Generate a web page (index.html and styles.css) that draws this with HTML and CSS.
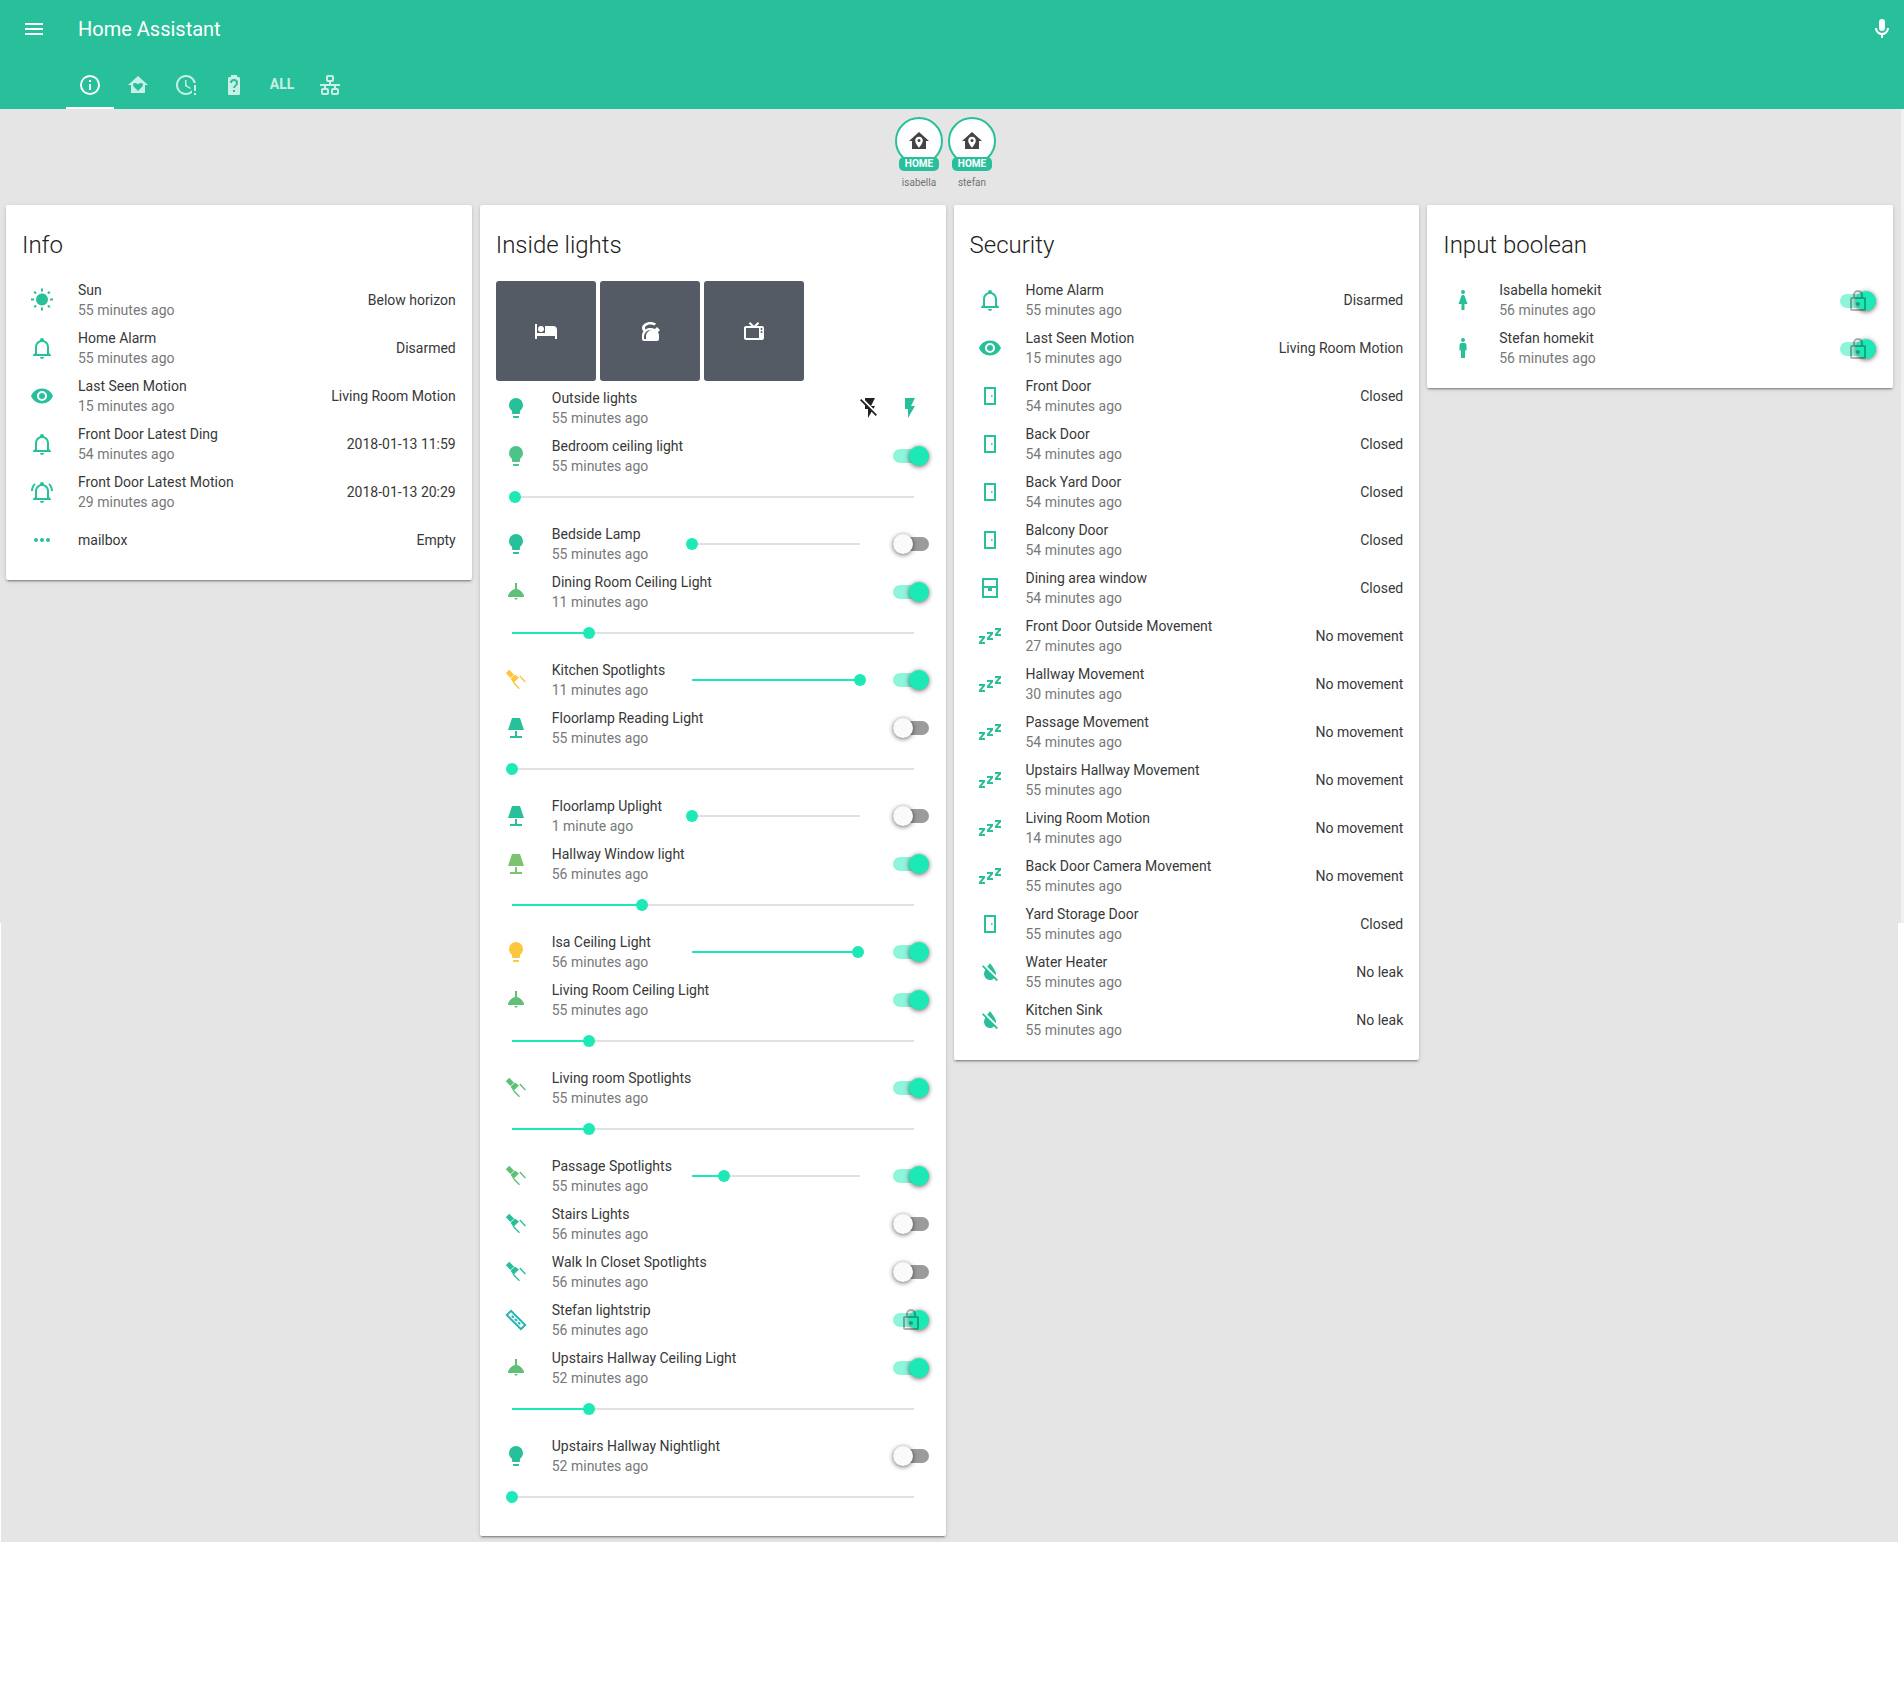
FILE: index.html
```html
<!DOCTYPE html>
<html lang="en">
<head>
    <meta charset="UTF-8">
    <meta name="viewport" content="width=device-width, initial-scale=1.0">
    <title>Home Assistant</title>
    <link rel="stylesheet" href="styles.css">
</head>
<body>
    <svg class="sprite" xmlns="http://www.w3.org/2000/svg">
        <symbol id="i-menu" viewBox="0 0 24 24"><path d="M3,6H21V8H3V6M3,11H21V13H3V11M3,16H21V18H3V16Z"/></symbol>
        <symbol id="i-info" viewBox="0 0 24 24"><path d="M11,9H13V7H11M12,20C7.59,20 4,16.41 4,12C4,7.59 7.59,4 12,4C16.41,4 20,7.59 20,12C20,16.41 16.41,20 12,20M12,2A10,10 0 0,0 2,12A10,10 0 0,0 12,22A10,10 0 0,0 22,12A10,10 0 0,0 12,2M11,17H13V11H11V17Z"/></symbol>
        <symbol id="i-home-heart" viewBox="0 0 24 24"><path fill-rule="evenodd" d="M12,3L2,12H5V20H19V12H22L12,3M12,18L7.6,13.4C6.5,12.2 7,10 9,10C10.2,10 11.4,10.6 12,11.4C12.6,10.6 13.8,10 15,10C17,10 17.5,12.2 16.4,13.4L12,18Z"/></symbol>
        <symbol id="i-clock-alert" viewBox="0 0 24 24"><path d="M11,7V13L16.2,16.1L17,14.9L12.5,12.2V7H11M20,12V18H22V12H20M20,20V22H22V20H20M18,20C16.3,21.3 14.3,22 12,22C6.5,22 2,17.5 2,12C2,6.5 6.5,2 12,2C16.8,2 20.9,5.4 21.8,10H19.7C18.8,6.6 15.7,4 12,4C7.6,4 4,7.6 4,12C4,16.4 7.6,20 12,20C14.4,20 16.5,18.9 18,17.3V20Z"/></symbol>
        <symbol id="i-battery" viewBox="0 0 24 24"><path d="M15.07,12.25L14.17,13.17C13.63,13.71 13.25,14.18 13.09,15H11.05C11.16,14.1 11.56,13.28 12.17,12.67L13.41,11.41C13.78,11.05 14,10.55 14,10C14,8.89 13.1,8 12,8A2,2 0 0,0 10,10H8A4,4 0 0,1 12,6A4,4 0 0,1 16,10C16,10.88 15.64,11.68 15.07,12.25M13,19H11V17H13M16.67,4H15V2H9V4H7.33A1.33,1.33 0 0,0 6,5.33V20.67C6,21.4 6.6,22 7.33,22H16.67A1.33,1.33 0 0,0 18,20.67V5.33C18,4.6 17.4,4 16.67,4Z"/></symbol>
        <symbol id="i-lan" viewBox="0 0 24 24"><path d="M10,2C8.89,2 8,2.89 8,4V7C8,8.11 8.89,9 10,9H11V11H2V13H6V15H5C3.89,15 3,15.89 3,17V20C3,21.11 3.89,22 5,22H9C10.11,22 11,21.11 11,20V17C11,15.89 10.11,15 9,15H8V13H16V15H15C13.89,15 13,15.89 13,17V20C13,21.11 13.89,22 15,22H19C20.11,22 21,21.11 21,20V17C21,15.89 20.11,15 19,15H18V13H22V11H13V9H14C15.11,9 16,8.11 16,7V4C16,2.89 15.11,2 14,2H10M10,4H14V7H10V4M5,17H9V20H5V17M15,17H19V20H15V17Z"/></symbol>
        <symbol id="i-mic" viewBox="0 0 24 24"><path d="M12,2A3,3 0 0,1 15,5V11A3,3 0 0,1 12,14A3,3 0 0,1 9,11V5A3,3 0 0,1 12,2M19,11C19,14.53 16.39,17.44 13,17.93V21H11V17.93C7.61,17.44 5,14.53 5,11H7A5,5 0 0,0 12,16A5,5 0 0,0 17,11H19Z"/></symbol>
        <symbol id="i-marker" viewBox="0 0 24 24"><path d="M12,3L2,12H5V20H19V12H22L12,3M12,7.7C14.1,7.7 15.8,9.4 15.8,11.5C15.8,14.5 12,18.7 12,18.7C12,18.7 8.2,14.5 8.2,11.5C8.2,9.4 9.9,7.7 12,7.7M12,10A1.5,1.5 0 0,0 10.5,11.5A1.5,1.5 0 0,0 12,13A1.5,1.5 0 0,0 13.5,11.5A1.5,1.5 0 0,0 12,10Z"/></symbol>
        <symbol id="i-sun" viewBox="0 0 24 24"><path d="M3.55,18.54L4.96,19.95L6.76,18.16L5.34,16.74M11,22.45C11.32,22.45 13,22.45 13,22.45V19.5H11M12,5.5A6,6 0 0,0 6,11.5A6,6 0 0,0 12,17.5A6,6 0 0,0 18,11.5C18,8.18 15.31,5.5 12,5.5M20,12.5H23V10.5H20M17.24,18.16L19.04,19.95L20.45,18.54L18.66,16.74M20.45,4.46L19.04,3.05L17.24,4.84L18.66,6.26M13,0.55H11V3.5H13M4,10.5H1V12.5H4M6.76,4.84L4.96,3.05L3.55,4.46L5.34,6.26L6.76,4.84Z"/></symbol>
        <symbol id="i-bell" viewBox="0 0 24 24"><path d="M10,21H14A2,2 0 0,1 12,23A2,2 0 0,1 10,21M21,19V20H3V19L5,17V11C5,7.9 7.03,5.17 10,4.29C10,4.19 10,4.1 10,4A2,2 0 0,1 12,2A2,2 0 0,1 14,4C14,4.1 14,4.19 14,4.29C16.97,5.17 19,7.9 19,11V17L21,19M17,11A5,5 0 0,0 12,6A5,5 0 0,0 7,11V18H17V11Z"/></symbol>
        <symbol id="i-bell-ring" viewBox="0 0 24 24"><path d="M10,21H14A2,2 0 0,1 12,23A2,2 0 0,1 10,21M21,19V20H3V19L5,17V11C5,7.9 7.03,5.17 10,4.29C10,4.19 10,4.1 10,4A2,2 0 0,1 12,2A2,2 0 0,1 14,4C14,4.1 14,4.19 14,4.29C16.97,5.17 19,7.9 19,11V17L21,19M17,11A5,5 0 0,0 12,6A5,5 0 0,0 7,11V18H17V11M19.75,3.19L18.33,4.61C20.04,6.3 21,8.6 21,11H23C23,8.07 21.84,5.25 19.75,3.19M1,11H3C3,8.6 3.96,6.3 5.67,4.61L4.25,3.19C2.16,5.25 1,8.07 1,11Z"/></symbol>
        <symbol id="i-eye" viewBox="0 0 24 24"><path d="M12,9A3,3 0 0,0 9,12A3,3 0 0,0 12,15A3,3 0 0,0 15,12A3,3 0 0,0 12,9M12,17A5,5 0 0,1 7,12A5,5 0 0,1 12,7A5,5 0 0,1 17,12A5,5 0 0,1 12,17M12,4.5C7,4.5 2.73,7.61 1,12C2.73,16.39 7,19.5 12,19.5C17,19.5 21.27,16.39 23,12C21.27,7.61 17,4.5 12,4.5Z"/></symbol>
        <symbol id="i-dots" viewBox="0 0 24 24"><path d="M16,12A2,2 0 0,1 18,10A2,2 0 0,1 20,12A2,2 0 0,1 18,14A2,2 0 0,1 16,12M10,12A2,2 0 0,1 12,10A2,2 0 0,1 14,12A2,2 0 0,1 12,14A2,2 0 0,1 10,12M4,12A2,2 0 0,1 6,10A2,2 0 0,1 8,12A2,2 0 0,1 6,14A2,2 0 0,1 4,12Z"/></symbol>
        <symbol id="i-bulb" viewBox="0 0 24 24"><path d="M12,2A7,7 0 0,0 5,9C5,11.38 6.19,13.47 8,14.74V17A1,1 0 0,0 9,18H15A1,1 0 0,0 16,17V14.74C17.81,13.47 19,11.38 19,9A7,7 0 0,0 12,2M9,21A1,1 0 0,0 10,22H14A1,1 0 0,0 15,21V20H9V21Z"/></symbol>
        <symbol id="i-ceiling" viewBox="0 0 24 24"><path d="M11,3H13V9C16,9.5 18.5,12 20,15.5V17H4V15.5C5.5,12 8,9.5 11,9V3M10,18H14L12,20Z"/></symbol>
        <symbol id="i-lamp" viewBox="0 0 24 24"><path d="M8,2H16L20,14H4L8,2M11,15H13V20H18V22H6V20H11V15Z"/></symbol>
        <symbol id="i-spot" viewBox="0 0 24 24"><path d="M1.8,5.2L5.2,1.8L10,6.4L6.4,10ZM6.6,10.8L10.8,6.6L15,9.4L9.4,15ZM15.3,8.6L16.3,7.6L21.9,13.6L20.9,14.6ZM8.9,15.1L9.9,14.1L15.9,20.3L14.9,21.3Z"/></symbol>
        <symbol id="i-strip" viewBox="0 0 24 24"><g transform="rotate(45 12 12)"><path fill-rule="evenodd" d="M1,8H23V16H1ZM3,10V14H21V10Z"/><path d="M6,11H9V13H6ZM10.5,11H13.5V13H10.5ZM15,11H18V13H15Z"/></g></symbol>
        <symbol id="i-hotel" viewBox="0 0 24 24"><path d="M19,7H11V14H3V5H1V20H3V17H21V20H23V11A4,4 0 0,0 19,7M7,13A3,3 0 0,0 10,10A3,3 0 0,0 7,7A3,3 0 0,0 4,10A3,3 0 0,0 7,13Z"/></symbol>
        <symbol id="i-kettle" viewBox="0 0 24 24"><path d="M12.5,3C7.81,3 4,5.69 4,9V9C4,10.19 4.5,11.34 5.44,12.33C4.53,13.5 4,14.96 4,16.5C4,17.64 4,18.83 4,20C4,21.11 4.89,22 6,22H19C20.11,22 21,21.11 21,20C21,18.85 21,17.61 21,16.5C21,15.28 20.66,14.07 20,13L22,11L19,8L16.9,10.1C15.58,9.38 14.05,9 12.5,9C10.65,9 8.95,9.53 7.55,10.41C7.19,9.97 7,9.5 7,9C7,7.21 9.46,5.5 12.5,5.5V5.5C13.93,5.5 15.3,5.89 16.34,6.58L18.11,4.81C16.59,3.66 14.55,3 12.5,3M12.5,11C12.84,11 13.17,11.04 13.5,11.09C10.39,11.57 8,14.25 8,17.5V20H6V17.5A6.5,6.5 0 0,1 12.5,11Z"/></symbol>
        <symbol id="i-tv" viewBox="0 0 24 24"><path d="M8.16,3L6.75,4.41L9.34,7H4C2.89,7 2,7.89 2,9V19C2,20.11 2.89,21 4,21H20C21.11,21 22,20.11 22,19V9C22,7.89 21.11,7 20,7H14.66L17.25,4.41L15.84,3L12,6.84L8.16,3M4,9H17V19H4V9M19.5,9A1,1 0 0,1 20.5,10A1,1 0 0,1 19.5,11A1,1 0 0,1 18.5,10A1,1 0 0,1 19.5,9M19.5,12A1,1 0 0,1 20.5,13A1,1 0 0,1 19.5,14A1,1 0 0,1 18.5,13A1,1 0 0,1 19.5,12Z"/></symbol>
        <symbol id="i-flash" viewBox="0 0 24 24"><path d="M7,2V13H10V22L17,10H13L17,2H7Z"/></symbol>
        <symbol id="i-flash-off" viewBox="0 0 24 24"><path d="M17,10H13L17,2H7V4.18L15.46,12.64M3.27,3L2,4.27L7,9.27V13H10V22L13.58,15.86L17.73,20L19,18.73L3.27,3Z"/></symbol>
        <symbol id="i-door" viewBox="0 0 24 24"><path fill-rule="evenodd" d="M6,3H18V21H6ZM8,5V19H16V5ZM13,11.2H14.6V12.8H13Z"/></symbol>
        <symbol id="i-window" viewBox="0 0 24 24"><path fill-rule="evenodd" d="M4,2H20V22H4ZM6,4V10H18V4ZM6,12V20H18V12H14V15H10V12Z"/></symbol>
        <symbol id="i-sleep" viewBox="0 0 24 24"><path d="M23,12H17V10L20.39,6H17V4H23V6L19.62,10H23V12M15,16H9V14L12.39,10H9V8H15V10L11.62,14H15V16M7,20H1V18L4.39,14H1V12H7V14L3.62,18H7V20Z"/></symbol>
        <symbol id="i-water-off" viewBox="0 0 24 24"><path d="M17.12,17.12L12.5,12.5L5.27,5.27L4,6.55L7.32,9.87C6.55,11.32 6,12.79 6,14A6,6 0 0,0 12,20C13.5,20 14.9,19.43 15.96,18.5L18.59,21.13L19.86,19.86L17.12,17.12M18,14C18,10 12,3.2 12,3.2C12,3.2 10.67,4.71 9.33,6.72L17.76,15.15C17.91,14.79 18,14.4 18,14Z"/></symbol>
        <symbol id="i-female" viewBox="0 0 24 24"><path d="M12,2A2,2 0 0,1 14,4A2,2 0 0,1 12,6A2,2 0 0,1 10,4A2,2 0 0,1 12,2M10.5,22V16H7.5L10.09,8.41C10.34,7.59 11.1,7 12,7C12.9,7 13.66,7.59 13.91,8.41L16.5,16H13.5V22H10.5Z"/></symbol>
        <symbol id="i-male" viewBox="0 0 24 24"><path d="M12,2A2,2 0 0,1 14,4A2,2 0 0,1 12,6A2,2 0 0,1 10,4A2,2 0 0,1 12,2M10.5,7H13.5A2,2 0 0,1 15.5,9V14.5H14V22H10V14.5H8.5V9A2,2 0 0,1 10.5,7Z"/></symbol>
        <symbol id="i-lock" viewBox="0 0 24 24"><path d="M12,17C10.89,17 10,16.1 10,15C10,13.89 10.89,13 12,13A2,2 0 0,1 14,15A2,2 0 0,1 12,17M18,20V10H6V20H18M18,8A2,2 0 0,1 20,10V20A2,2 0 0,1 18,22H6C4.89,22 4,21.1 4,20V10C4,8.89 4.89,8 6,8H7V6A5,5 0 0,1 12,1A5,5 0 0,1 17,6V8H18M12,3A3,3 0 0,0 9,6V8H15V6A3,3 0 0,0 12,3Z"/></symbol>
    </svg>

    <header class="app-header">
        <div class="toolbar">
            <span class="icon-button"><svg class="ico"><use href="#i-menu"/></svg></span>
            <div class="app-title">Home Assistant</div>
            <span class="icon-button"><svg class="ico"><use href="#i-mic"/></svg></span>
        </div>
        <nav class="tabs">
            <div class="tab active"><svg class="ico"><use href="#i-info"/></svg></div>
            <div class="tab"><svg class="ico"><use href="#i-home-heart"/></svg></div>
            <div class="tab"><svg class="ico"><use href="#i-clock-alert"/></svg></div>
            <div class="tab"><svg class="ico"><use href="#i-battery"/></svg></div>
            <div class="tab tab-text">ALL</div>
            <div class="tab"><svg class="ico"><use href="#i-lan"/></svg></div>
        </nav>
    </header>

    <div class="badges">
        <div class="badge">
            <div class="badge-circle"><svg class="ico"><use href="#i-marker"/></svg></div>
            <div class="badge-label">HOME</div>
            <div class="badge-name">isabella</div>
        </div>
        <div class="badge">
            <div class="badge-circle"><svg class="ico"><use href="#i-marker"/></svg></div>
            <div class="badge-label">HOME</div>
            <div class="badge-name">stefan</div>
        </div>
    </div>

    <main class="columns">
        <section class="card">
            <h2 class="card-title">Info</h2>
            <div class="row"><svg class="row-icon"><use href="#i-sun"/></svg><div class="info"><div class="name">Sun</div><div class="ago">55 minutes ago</div></div><div class="value">Below horizon</div></div>
            <div class="row"><svg class="row-icon"><use href="#i-bell"/></svg><div class="info"><div class="name">Home Alarm</div><div class="ago">55 minutes ago</div></div><div class="value">Disarmed</div></div>
            <div class="row"><svg class="row-icon"><use href="#i-eye"/></svg><div class="info"><div class="name">Last Seen Motion</div><div class="ago">15 minutes ago</div></div><div class="value">Living Room Motion</div></div>
            <div class="row"><svg class="row-icon"><use href="#i-bell"/></svg><div class="info"><div class="name">Front Door Latest Ding</div><div class="ago">54 minutes ago</div></div><div class="value">2018-01-13 11:59</div></div>
            <div class="row"><svg class="row-icon"><use href="#i-bell-ring"/></svg><div class="info"><div class="name">Front Door Latest Motion</div><div class="ago">29 minutes ago</div></div><div class="value">2018-01-13 20:29</div></div>
            <div class="row"><svg class="row-icon"><use href="#i-dots"/></svg><div class="info"><div class="name">mailbox</div></div><div class="value">Empty</div></div>
        </section>

        <section class="card">
            <h2 class="card-title">Inside lights</h2>
            <div class="tiles">
                <div class="tile"><svg class="ico"><use href="#i-hotel"/></svg></div>
                <div class="tile"><svg class="ico"><use href="#i-kettle"/></svg></div>
                <div class="tile"><svg class="ico"><use href="#i-tv"/></svg></div>
            </div>
            <div class="row">
                <svg class="row-icon"><use href="#i-bulb"/></svg>
                <div class="info"><div class="name">Outside lights</div><div class="ago">55 minutes ago</div></div>
                <svg class="flash-btn flash-off"><use href="#i-flash-off"/></svg>
                <svg class="flash-btn flash-on"><use href="#i-flash"/></svg>
            </div>
            <div class="row">
                <svg class="row-icon lit-mint"><use href="#i-bulb"/></svg>
                <div class="info"><div class="name">Bedroom ceiling light</div><div class="ago">55 minutes ago</div></div>
                <div class="toggle on"><span class="knob"></span></div>
            </div>
            <div class="slider-row"><div class="slider"><div class="fill" style="width:0.7%"></div><span class="thumb"></span></div></div>
            <div class="row">
                <svg class="row-icon"><use href="#i-bulb"/></svg>
                <div class="info"><div class="name">Bedside Lamp</div><div class="ago">55 minutes ago</div></div>
                <div class="slider inline"><div class="fill" style="width:0%"></div><span class="thumb"></span></div>
                <div class="toggle"><span class="knob"></span></div>
            </div>
            <div class="row">
                <svg class="row-icon lit-green"><use href="#i-ceiling"/></svg>
                <div class="info"><div class="name">Dining Room Ceiling Light</div><div class="ago">11 minutes ago</div></div>
                <div class="toggle on"><span class="knob"></span></div>
            </div>
            <div class="slider-row"><div class="slider"><div class="fill" style="width:19.2%"></div><span class="thumb"></span></div></div>
            <div class="row">
                <svg class="row-icon lit-yellow"><use href="#i-spot"/></svg>
                <div class="info"><div class="name">Kitchen Spotlights</div><div class="ago">11 minutes ago</div></div>
                <div class="slider inline"><div class="fill" style="width:100%"></div><span class="thumb"></span></div>
                <div class="toggle on"><span class="knob"></span></div>
            </div>
            <div class="row">
                <svg class="row-icon"><use href="#i-lamp"/></svg>
                <div class="info"><div class="name">Floorlamp Reading Light</div><div class="ago">55 minutes ago</div></div>
                <div class="toggle"><span class="knob"></span></div>
            </div>
            <div class="slider-row"><div class="slider"><div class="fill" style="width:0%"></div><span class="thumb"></span></div></div>
            <div class="row">
                <svg class="row-icon"><use href="#i-lamp"/></svg>
                <div class="info"><div class="name">Floorlamp Uplight</div><div class="ago">1 minute ago</div></div>
                <div class="slider inline"><div class="fill" style="width:0%"></div><span class="thumb"></span></div>
                <div class="toggle"><span class="knob"></span></div>
            </div>
            <div class="row">
                <svg class="row-icon lit-lime"><use href="#i-lamp"/></svg>
                <div class="info"><div class="name">Hallway Window light</div><div class="ago">56 minutes ago</div></div>
                <div class="toggle on"><span class="knob"></span></div>
            </div>
            <div class="slider-row"><div class="slider"><div class="fill" style="width:32.3%"></div><span class="thumb"></span></div></div>
            <div class="row">
                <svg class="row-icon lit-yellow"><use href="#i-bulb"/></svg>
                <div class="info"><div class="name">Isa Ceiling Light</div><div class="ago">56 minutes ago</div></div>
                <div class="slider inline"><div class="fill" style="width:99.2%"></div><span class="thumb"></span></div>
                <div class="toggle on"><span class="knob"></span></div>
            </div>
            <div class="row">
                <svg class="row-icon lit-green"><use href="#i-ceiling"/></svg>
                <div class="info"><div class="name">Living Room Ceiling Light</div><div class="ago">55 minutes ago</div></div>
                <div class="toggle on"><span class="knob"></span></div>
            </div>
            <div class="slider-row"><div class="slider"><div class="fill" style="width:19.2%"></div><span class="thumb"></span></div></div>
            <div class="row">
                <svg class="row-icon lit-green"><use href="#i-spot"/></svg>
                <div class="info"><div class="name">Living room Spotlights</div><div class="ago">55 minutes ago</div></div>
                <div class="toggle on"><span class="knob"></span></div>
            </div>
            <div class="slider-row"><div class="slider"><div class="fill" style="width:19.2%"></div><span class="thumb"></span></div></div>
            <div class="row">
                <svg class="row-icon lit-green"><use href="#i-spot"/></svg>
                <div class="info"><div class="name">Passage Spotlights</div><div class="ago">55 minutes ago</div></div>
                <div class="slider inline"><div class="fill" style="width:19.2%"></div><span class="thumb"></span></div>
                <div class="toggle on"><span class="knob"></span></div>
            </div>
            <div class="row">
                <svg class="row-icon"><use href="#i-spot"/></svg>
                <div class="info"><div class="name">Stairs Lights</div><div class="ago">56 minutes ago</div></div>
                <div class="toggle"><span class="knob"></span></div>
            </div>
            <div class="row">
                <svg class="row-icon"><use href="#i-spot"/></svg>
                <div class="info"><div class="name">Walk In Closet Spotlights</div><div class="ago">56 minutes ago</div></div>
                <div class="toggle"><span class="knob"></span></div>
            </div>
            <div class="row">
                <svg class="row-icon lit-blue"><use href="#i-strip"/></svg>
                <div class="info"><div class="name">Stefan lightstrip</div><div class="ago">56 minutes ago</div></div>
                <div class="toggle on"><span class="knob"></span><svg class="lock"><use href="#i-lock"/></svg></div>
            </div>
            <div class="row">
                <svg class="row-icon lit-green"><use href="#i-ceiling"/></svg>
                <div class="info"><div class="name">Upstairs Hallway Ceiling Light</div><div class="ago">52 minutes ago</div></div>
                <div class="toggle on"><span class="knob"></span></div>
            </div>
            <div class="slider-row"><div class="slider"><div class="fill" style="width:19.2%"></div><span class="thumb"></span></div></div>
            <div class="row">
                <svg class="row-icon"><use href="#i-bulb"/></svg>
                <div class="info"><div class="name">Upstairs Hallway Nightlight</div><div class="ago">52 minutes ago</div></div>
                <div class="toggle"><span class="knob"></span></div>
            </div>
            <div class="slider-row"><div class="slider"><div class="fill" style="width:0%"></div><span class="thumb"></span></div></div>
        </section>

        <section class="card">
            <h2 class="card-title">Security</h2>
            <div class="row"><svg class="row-icon"><use href="#i-bell"/></svg><div class="info"><div class="name">Home Alarm</div><div class="ago">55 minutes ago</div></div><div class="value">Disarmed</div></div>
            <div class="row"><svg class="row-icon"><use href="#i-eye"/></svg><div class="info"><div class="name">Last Seen Motion</div><div class="ago">15 minutes ago</div></div><div class="value">Living Room Motion</div></div>
            <div class="row"><svg class="row-icon"><use href="#i-door"/></svg><div class="info"><div class="name">Front Door</div><div class="ago">54 minutes ago</div></div><div class="value">Closed</div></div>
            <div class="row"><svg class="row-icon"><use href="#i-door"/></svg><div class="info"><div class="name">Back Door</div><div class="ago">54 minutes ago</div></div><div class="value">Closed</div></div>
            <div class="row"><svg class="row-icon"><use href="#i-door"/></svg><div class="info"><div class="name">Back Yard Door</div><div class="ago">54 minutes ago</div></div><div class="value">Closed</div></div>
            <div class="row"><svg class="row-icon"><use href="#i-door"/></svg><div class="info"><div class="name">Balcony Door</div><div class="ago">54 minutes ago</div></div><div class="value">Closed</div></div>
            <div class="row"><svg class="row-icon"><use href="#i-window"/></svg><div class="info"><div class="name">Dining area window</div><div class="ago">54 minutes ago</div></div><div class="value">Closed</div></div>
            <div class="row"><svg class="row-icon"><use href="#i-sleep"/></svg><div class="info"><div class="name">Front Door Outside Movement</div><div class="ago">27 minutes ago</div></div><div class="value">No movement</div></div>
            <div class="row"><svg class="row-icon"><use href="#i-sleep"/></svg><div class="info"><div class="name">Hallway Movement</div><div class="ago">30 minutes ago</div></div><div class="value">No movement</div></div>
            <div class="row"><svg class="row-icon"><use href="#i-sleep"/></svg><div class="info"><div class="name">Passage Movement</div><div class="ago">54 minutes ago</div></div><div class="value">No movement</div></div>
            <div class="row"><svg class="row-icon"><use href="#i-sleep"/></svg><div class="info"><div class="name">Upstairs Hallway Movement</div><div class="ago">55 minutes ago</div></div><div class="value">No movement</div></div>
            <div class="row"><svg class="row-icon"><use href="#i-sleep"/></svg><div class="info"><div class="name">Living Room Motion</div><div class="ago">14 minutes ago</div></div><div class="value">No movement</div></div>
            <div class="row"><svg class="row-icon"><use href="#i-sleep"/></svg><div class="info"><div class="name">Back Door Camera Movement</div><div class="ago">55 minutes ago</div></div><div class="value">No movement</div></div>
            <div class="row"><svg class="row-icon"><use href="#i-door"/></svg><div class="info"><div class="name">Yard Storage Door</div><div class="ago">55 minutes ago</div></div><div class="value">Closed</div></div>
            <div class="row"><svg class="row-icon"><use href="#i-water-off"/></svg><div class="info"><div class="name">Water Heater</div><div class="ago">55 minutes ago</div></div><div class="value">No leak</div></div>
            <div class="row"><svg class="row-icon"><use href="#i-water-off"/></svg><div class="info"><div class="name">Kitchen Sink</div><div class="ago">55 minutes ago</div></div><div class="value">No leak</div></div>
        </section>

        <section class="card card-boolean">
            <h2 class="card-title">Input boolean</h2>
            <div class="row">
                <svg class="row-icon"><use href="#i-female"/></svg>
                <div class="info"><div class="name">Isabella homekit</div><div class="ago">56 minutes ago</div></div>
                <div class="toggle on"><span class="knob"></span><svg class="lock"><use href="#i-lock"/></svg></div>
            </div>
            <div class="row">
                <svg class="row-icon"><use href="#i-male"/></svg>
                <div class="info"><div class="name">Stefan homekit</div><div class="ago">56 minutes ago</div></div>
                <div class="toggle on"><span class="knob"></span><svg class="lock"><use href="#i-lock"/></svg></div>
            </div>
        </section>
    </main>
</body>
</html>
```

FILE: styles.css
```css
* {
    box-sizing: border-box;
}
body {
    margin: 0;
    min-height: 100vh;
    font-family: Roboto, "Liberation Sans", sans-serif;
    font-size: 14px;
    color: #212121;
    /* the grey view stops short of the window edges, as in the capture */
    background:
        linear-gradient(#e5e5e5, #e5e5e5) 0 109px / 1901px 814px no-repeat,
        linear-gradient(#e5e5e5, #e5e5e5) 1px 923px / 1897px 619px no-repeat,
        linear-gradient(#f1f1f1, #f1f1f1) 1901px 109px / 3px 814px no-repeat,
        #fff;
}
.sprite {
    display: none;
}
.ico {
    width: 24px;
    height: 24px;
    fill: currentColor;
    display: block;
}

/* header */
.app-header {
    height: 109px;
    background-color: #28c09a;
    color: #fff;
}
.toolbar {
    height: 61px;
    padding: 0 2px 3px 14px;
    display: flex;
    align-items: center;
}
.icon-button {
    width: 40px;
    height: 40px;
    display: flex;
    align-items: center;
    justify-content: center;
}
.app-title {
    flex: 1;
    margin-left: 24px;
    font-size: 20px;
    line-height: 28px;
}
.tabs {
    display: flex;
    height: 48px;
    padding-left: 66px;
}
.tab {
    width: 48px;
    height: 48px;
    display: flex;
    align-items: center;
    justify-content: center;
    color: rgba(255, 255, 255, 0.75);
    border-bottom: 2px solid transparent;
    padding-top: 2px;
}
.tab.active {
    color: #fff;
    border-bottom-color: #fff;
}
.tab-text {
    font-weight: 700;
    padding-top: 0;
}

/* badges */
.badges {
    height: 96px;
    padding: 8px 13px 0 0;
    display: flex;
    justify-content: center;
    gap: 5px;
}
.badge {
    width: 48px;
    display: flex;
    flex-direction: column;
    align-items: center;
}
.badge-circle {
    width: 48px;
    height: 48px;
    border-radius: 50%;
    border: 2px solid #28c09a;
    background-color: #fff;
    color: #444;
    display: flex;
    align-items: center;
    justify-content: center;
    flex: none;
}
.badge-label {
    width: 40px;
    height: 14px;
    margin-top: -8px;
    border-radius: 5px;
    background-color: #28c09a;
    color: #fff;
    font-size: 10px;
    font-weight: 700;
    line-height: 14px;
    text-align: center;
    position: relative;
}
.badge-name {
    margin-top: 6px;
    font-size: 10px;
    line-height: 12px;
    color: #727272;
}

/* cards */
.columns {
    display: grid;
    grid-template-columns: repeat(4, 1fr);
    gap: 8px;
    padding: 0 11px 0 6px;
    align-items: start;
}
.card {
    background-color: #fff;
    border-radius: 2px;
    padding: 0 16px 16px;
    box-shadow: 0 2px 2px 0 rgba(0, 0, 0, 0.14), 0 1px 5px 0 rgba(0, 0, 0, 0.12), 0 3px 1px -2px rgba(0, 0, 0, 0.2);
}
.card-title {
    margin: 0;
    padding: 24px 0 15px;
    font-size: 24px;
    font-weight: 300;
    line-height: 32px;
    height: 71px;
}
.row {
    height: 48px;
    display: flex;
    align-items: center;
}
.row-icon {
    width: 24px;
    height: 24px;
    margin: 0 24px 0 8px;
    fill: #28c09a;
    flex: none;
}
.lit-yellow { fill: #fdc63f; }
.lit-green { fill: #60c07a; }
.lit-lime { fill: #7dc36f; }
.lit-mint { fill: #4cc489; }
.lit-blue { fill: #26b5b4; }
.info {
    flex: 1;
    min-width: 0;
    line-height: 20px;
}
.name {
    color: #383838;
    white-space: nowrap;
}
.ago {
    color: #787878;
    white-space: nowrap;
}
.value {
    color: #383838;
    white-space: nowrap;
    margin-left: 16px;
}

/* lights */
.tiles {
    display: flex;
    gap: 4px;
    margin: 5px 0 3px;
}
.tile {
    width: 100px;
    height: 100px;
    border-radius: 3px;
    background-color: #555b64;
    color: #fff;
    display: flex;
    align-items: center;
    justify-content: center;
}
.flash-btn {
    width: 24px;
    height: 24px;
    flex: none;
}
.flash-off {
    fill: #212121;
    margin-right: 16px;
}
.flash-on {
    fill: #28c09a;
    margin-right: 8px;
}
.toggle {
    width: 36px;
    height: 14px;
    margin-right: 1px;
    border-radius: 7px;
    background-color: #9b9b9b;
    display: flex;
    align-items: center;
    flex: none;
    position: relative;
}
.toggle.on {
    background-color: #8ef4da;
    justify-content: flex-end;
}
.card-boolean .toggle {
    margin-top: 1px;
}
.knob {
    width: 20px;
    height: 20px;
    border-radius: 50%;
    background-color: #fafafa;
    box-shadow: 0 1px 5px rgba(0, 0, 0, 0.6);
    flex: none;
}
.toggle.on .knob {
    background-color: #1de9b6;
}
.lock {
    position: absolute;
    left: 6px;
    top: -5px;
    width: 24px;
    height: 24px;
    fill: rgba(0, 0, 0, 0.3);
}
.slider-row {
    height: 40px;
    padding: 16px 16px 0;
}
.slider {
    height: 2px;
    background-color: #e0e0e0;
    display: flex;
    align-items: center;
}
.slider.inline {
    width: 168px;
    margin-right: 33px;
    flex: none;
}
.fill {
    height: 2px;
    background-color: #1de9b6;
    flex: none;
}
.thumb {
    width: 12px;
    height: 12px;
    margin-left: -6px;
    border-radius: 50%;
    background-color: #1de9b6;
    flex: none;
}
```
